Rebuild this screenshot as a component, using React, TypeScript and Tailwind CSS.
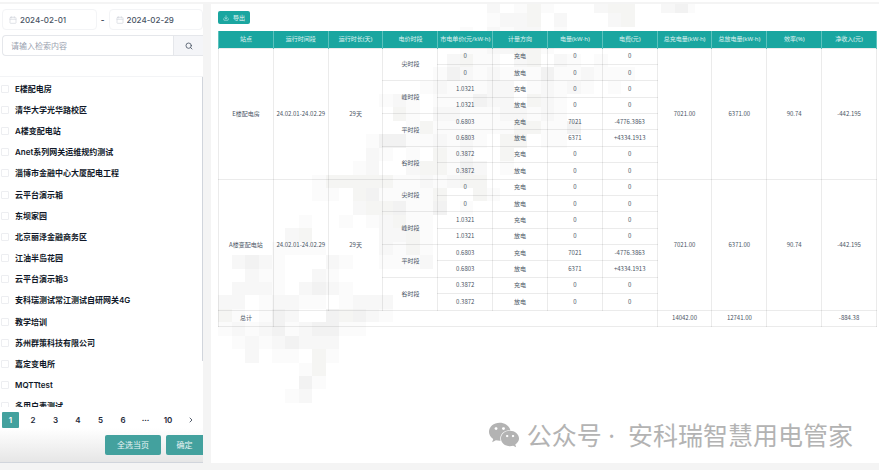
import { useState } from 'react';
import { Calendar, ChevronRight, Download, Search } from 'lucide-react';
import { FaWeixin } from 'react-icons/fa';

const SITES = [
  'E楼配电房',
  '清华大学光华路校区',
  'A楼变配电站',
  'Anet系列网关运维规约测试',
  '淄博市金融中心大厦配电工程',
  '云平台演示箱',
  '东坝家园',
  '北京丽泽金融商务区',
  '江油半岛花园',
  '云平台演示箱3',
  '安科瑞测试常江测试自研网关4G',
  '教学培训',
  '苏州群策科技有限公司',
  '嘉定变电所',
  'MQTTtest',
  '多用户表测试',
];

const PAGES = ['1', '2', '3', '4', '5', '6', '···', '10'];

const COLUMNS = [
  '站点',
  '运行时间段',
  '运行时长(天)',
  '电价时段',
  '市电单价(元/kW·h)',
  '计量方向',
  '电量(kW·h)',
  '电费(元)',
  '总充电量(kW·h)',
  '总放电量(kW·h)',
  '效率(%)',
  '净收入(元)',
];

// [period, price, charge kWh, charge fee, discharge kWh, discharge fee]
const PERIODS = [
  ['尖时段', '0', '0', '0', '0', '0'],
  ['峰时段', '1.0321', '0', '0', '0', '0'],
  ['平时段', '0.6803', '7021', '-4776.3863', '6371', '+4334.1913'],
  ['谷时段', '0.3872', '0', '0', '0', '0'],
];

// Tinted squares behind the report, one string per row; w is the warm grey.
const MOSAIC = [
  '....................2.1w1...2ww..231',
  '....................122w.2...2w.....',
  '..................1.2122.1..........',
  '..................1122ww1...........',
  '.................2w11.2w.21.1.......',
  '................132121113112111.....',
  '...............1211122.12121.1......',
  '............121.111322.w21..........',
  '.............w1.2211122121..........',
  '..............1w111111ww113.........',
  '...........133112121.ww.11..........',
  '...........21.1.w12..w..............',
  '..........12..2ww132.1..............',
  '.......1wwwww11212ww................',
  '.......11.w31111w..w1...............',
  '..........2ww3113.1.................',
  '......1..1.12w11....................',
  '.....2w.....22w1....................',
  '....1111....21w1....................',
  '.2321...21..1112....................',
  '..211..21...........................',
  '.2221.2321..........................',
  '22.12211.1222.......................',
  'w1.132..3w321.......................',
  '12123123311.........................',
  '.12123222...........................',
  '..2.11.w1...........................',
  '......1w............................',
  '......31............................',
  '.....12.............................',
];

const TINTS: Record<string, string> = { '1': '#fbfbfb', '2': '#f7f7f7', '3': '#f2f2f2', w: '#f5f5f3' };

function Mosaic() {
  return (
    <svg
      aria-hidden="true"
      width="484"
      height="404"
      viewBox="211 4 484 404"
      shapeRendering="crispEdges"
      className="pointer-events-none absolute left-0 top-0"
    >
      {MOSAIC.flatMap((row, r) =>
        row.split('').map((c, k) =>
          c === '.' ? null : (
            <rect key={`${r}-${k}`} x={218.3 + k * 13.43} y={r * 13.43} width={13.43} height={13.43} fill={TINTS[c]} />
          ),
        ),
      )}
    </svg>
  );
}

function DateField({ label, value }: { label: string; value: string }) {
  return (
    <label className="flex h-[21px] min-w-0 flex-1 items-center gap-[3px] rounded-sm border border-gray-100 px-1.5">
      <Calendar className="size-2 shrink-0 text-gray-300" strokeWidth={2} />
      <input
        aria-label={label}
        defaultValue={value}
        className="w-full min-w-0 text-[8px] font-medium text-gray-600 outline-none"
      />
    </label>
  );
}

function Sidebar() {
  const [page, setPage] = useState('1');

  return (
    <aside className="flex w-[203px] shrink-0 flex-col overflow-hidden border-b border-gray-300 bg-white">
      <div className="flex items-center pl-0.5 pt-[5px]">
        <DateField label="开始日期" value="2024-02-01" />
        <span className="w-3 text-center text-[8px] font-bold text-gray-600">-</span>
        <DateField label="结束日期" value="2024-02-29" />
      </div>
      <div className="ml-0.5 mt-[5px] flex h-[21px] overflow-hidden rounded-l-sm border border-r-0 border-gray-200">
        <input
          aria-label="检索"
          placeholder="请输入检索内容"
          className="min-w-0 flex-1 px-2 text-[8px] outline-none placeholder:text-gray-400"
        />
        <button
          aria-label="搜索"
          className="flex w-[30px] items-center justify-center border-l border-gray-200 bg-[#f4f5f8] text-gray-600"
        >
          <Search className="size-2" strokeWidth={2.5} />
        </button>
      </div>

      <div className="relative mt-5 h-[331px] overflow-hidden border-t border-gray-100">
        <ul className="grid h-[340px] auto-rows-fr pt-px">
          {SITES.map((site) => (
            <li key={site} className="flex items-center">
              <label className="flex items-center gap-1.5 pl-px text-[8px] font-semibold text-gray-900">
                <input type="checkbox" className="size-2 appearance-none rounded-[1px] border border-gray-200/70 checked:bg-[#43a19e]" />
                {site}
              </label>
            </li>
          ))}
        </ul>
        <div className="absolute right-0 top-0 h-[284px] w-px bg-gray-300" />
      </div>

      <nav aria-label="分页" className="mt-[5px] flex justify-between pl-0.5 pr-1">
        {PAGES.map((p) => (
          <button
            key={p}
            onClick={() => setPage(p)}
            className={`h-4 w-[17px] rounded-[1px] text-[8px] font-semibold ${
              p === page ? 'bg-[#43a19e] text-white' : 'text-gray-800'
            }`}
          >
            {p}
          </button>
        ))}
        <button aria-label="下一页" className="flex h-4 w-[17px] items-center justify-center text-gray-700">
          <ChevronRight className="size-2" strokeWidth={2.5} />
        </button>
      </nav>

      <div className="flex flex-1 items-start justify-end gap-[5px] bg-linear-to-b from-white to-[#e6e6e6] pt-[7px]">
        <button className="h-5 w-14 rounded-xs bg-[#43a19e] text-[8px] text-white/90">全选当页</button>
        <button className="h-5 w-[37px] rounded-l-xs bg-[#43a19e] text-[8px] text-white/90">确定</button>
      </div>
    </aside>
  );
}

function SiteRows({ name }: { name: string }) {
  return (
    <>
      {PERIODS.flatMap(([period, price, inKwh, inFee, outKwh, outFee], i) => [
        <tr key={`${period}-in`}>
          {i === 0 && (
            <>
              <td rowSpan={8}>{name}</td>
              <td rowSpan={8}>24.02.01-24.02.29</td>
              <td rowSpan={8}>29天</td>
            </>
          )}
          <td rowSpan={2}>{period}</td>
          <td>{price}</td>
          <td>充电</td>
          <td>{inKwh}</td>
          <td>{inFee}</td>
          {i === 0 && (
            <>
              <td rowSpan={8}>7021.00</td>
              <td rowSpan={8}>6371.00</td>
              <td rowSpan={8}>90.74</td>
              <td rowSpan={8}>-442.195</td>
            </>
          )}
        </tr>,
        <tr key={`${period}-out`}>
          <td>{price}</td>
          <td>放电</td>
          <td>{outKwh}</td>
          <td>{outFee}</td>
        </tr>,
      ])}
    </>
  );
}

function Report() {
  return (
    <main className="relative flex min-w-0 flex-1 flex-col bg-white pl-[7px] pr-0.5 pt-[7px] font-['Noto_Sans_CJK_SC',sans-serif]">
      <Mosaic />
      <button className="relative flex h-[13px] w-8 items-center justify-center gap-1 rounded-xs bg-[#1aa6a0] text-[6px] text-white/90">
        <Download className="size-1.5" />
        导出
      </button>

      <table className="relative mt-[7px] h-[296px] w-full table-fixed border-collapse whitespace-nowrap text-center text-[6px] leading-[8px] text-gray-600 [&_td]:h-4 [&_td]:border [&_td]:border-black/8 [&_td]:p-0">
        <thead className="font-['Noto_Sans','Noto_Sans_CJK_SC',sans-serif]">
          <tr className="bg-[#1aa6a0] text-white/85">
            {COLUMNS.map((c) => (
              <th key={c} className="h-[17px] border border-y-0 border-[#5cc2bd] p-0 font-normal">
                {c}
              </th>
            ))}
          </tr>
        </thead>
        <tbody>
          <SiteRows name="E楼配电房" />
          <SiteRows name="A楼变配电站" />
          <tr>
            <td>总计</td>
            <td colSpan={7} />
            <td>14042.00</td>
            <td>12741.00</td>
            <td />
            <td>-884.38</td>
          </tr>
        </tbody>
      </table>

      <div className="mb-3 mr-6 mt-auto flex items-center justify-end gap-[7px] font-['Noto_Sans','Noto_Sans_CJK_SC',sans-serif] text-[25px] leading-8 text-[#b3b3b3]">
        <FaWeixin className="h-7 w-8" />
        <span>公众号 ·{'\u00a0'} 安科瑞智慧用电管家</span>
      </div>
    </main>
  );
}

export default function App() {
  return (
    <div className="flex min-h-screen flex-col bg-[#f4f4f4] font-[Inter,'Noto_Sans_CJK_SC',sans-serif]">
      <div className="h-0.5 bg-white" />
      <div className="flex flex-1 gap-2 pb-[7px] pt-0.5">
        <Sidebar />
        <Report />
      </div>
    </div>
  );
}
